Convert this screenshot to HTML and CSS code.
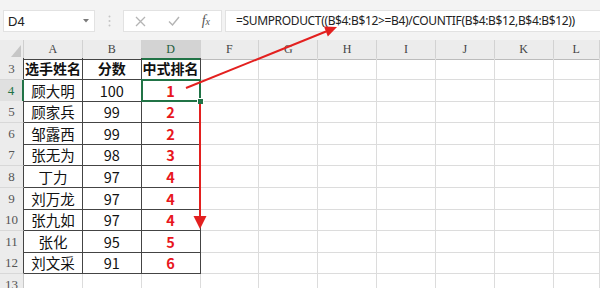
FILE: index.html
```html
<!DOCTYPE html>
<html lang="zh">
<head>
  <meta charset="UTF-8" />
  <title>中式排名</title>
  <link rel="stylesheet" href="styles.css">
</head>
<body>
  <div class="bar">
    <div class="namebox">
      <span>D4</span>
      <svg class="drop" width="6" height="4" viewBox="0 0 6 4"><path d="M0 0H6L3 3.5Z" fill="#7a7a7a"/></svg>
    </div>
    <div class="sep">
      <svg width="3" height="12" viewBox="0 0 3 12"><circle cx="1.5" cy="1.5" r="1" fill="#c4c4c4"/><circle cx="1.5" cy="6" r="1" fill="#c4c4c4"/><circle cx="1.5" cy="10.5" r="1" fill="#c4c4c4"/></svg>
    </div>
    <div class="fxbox">
      <svg width="11" height="11" viewBox="0 0 11 11"><path d="M1 1L10 10M10 1L1 10" stroke="#b4b4b4" stroke-width="1.3"/></svg>
      <svg width="12" height="10" viewBox="0 0 12 10"><path d="M1 5.5L4.5 9L11 1" fill="none" stroke="#b4b4b4" stroke-width="1.4"/></svg>
      <span class="fx">f<small>x</small></span>
    </div>
    <div class="formula">=SUMPRODUCT((B$4:B$12&gt;=B4)/COUNTIF(B$4:B$12,B$4:B$12))</div>
  </div>

  <div class="sheet">
    <div class="row head">
      <div class="corner"></div>
      <div class="ch edge">A</div><div class="ch edge">B</div><div class="ch on">D</div>
      <div class="ch">F</div><div class="ch">G</div><div class="ch">H</div><div class="ch">I</div><div class="ch">J</div><div class="ch">K</div><div class="ch">L</div>
    </div>
    <div class="row">
      <div class="rh edge">3</div>
      <div class="c t b">选手姓名</div><div class="c t b">分数</div><div class="c t b">中式排名</div>
      <div class="c"></div><div class="c"></div><div class="c"></div><div class="c"></div><div class="c"></div><div class="c"></div><div class="c"></div>
    </div>
    <div class="row">
      <div class="rh edge on">4</div>
      <div class="c t">顾大明</div><div class="c t">100</div><div class="c t rank sel">1</div>
      <div class="c"></div><div class="c"></div><div class="c"></div><div class="c"></div><div class="c"></div><div class="c"></div><div class="c"></div>
    </div>
    <div class="row">
      <div class="rh edge">5</div>
      <div class="c t">顾家兵</div><div class="c t">99</div><div class="c t rank">2</div>
      <div class="c"></div><div class="c"></div><div class="c"></div><div class="c"></div><div class="c"></div><div class="c"></div><div class="c"></div>
    </div>
    <div class="row">
      <div class="rh edge">6</div>
      <div class="c t">邹露西</div><div class="c t">99</div><div class="c t rank">2</div>
      <div class="c"></div><div class="c"></div><div class="c"></div><div class="c"></div><div class="c"></div><div class="c"></div><div class="c"></div>
    </div>
    <div class="row">
      <div class="rh edge">7</div>
      <div class="c t">张无为</div><div class="c t">98</div><div class="c t rank">3</div>
      <div class="c"></div><div class="c"></div><div class="c"></div><div class="c"></div><div class="c"></div><div class="c"></div><div class="c"></div>
    </div>
    <div class="row">
      <div class="rh edge">8</div>
      <div class="c t">丁力</div><div class="c t">97</div><div class="c t rank">4</div>
      <div class="c"></div><div class="c"></div><div class="c"></div><div class="c"></div><div class="c"></div><div class="c"></div><div class="c"></div>
    </div>
    <div class="row">
      <div class="rh edge">9</div>
      <div class="c t">刘万龙</div><div class="c t">97</div><div class="c t rank">4</div>
      <div class="c"></div><div class="c"></div><div class="c"></div><div class="c"></div><div class="c"></div><div class="c"></div><div class="c"></div>
    </div>
    <div class="row">
      <div class="rh edge">10</div>
      <div class="c t">张九如</div><div class="c t">97</div><div class="c t rank">4</div>
      <div class="c"></div><div class="c"></div><div class="c"></div><div class="c"></div><div class="c"></div><div class="c"></div><div class="c"></div>
    </div>
    <div class="row">
      <div class="rh edge">11</div>
      <div class="c t">张化</div><div class="c t">95</div><div class="c t rank">5</div>
      <div class="c"></div><div class="c"></div><div class="c"></div><div class="c"></div><div class="c"></div><div class="c"></div><div class="c"></div>
    </div>
    <div class="row">
      <div class="rh edge">12</div>
      <div class="c t">刘文采</div><div class="c t">91</div><div class="c t rank">6</div>
      <div class="c"></div><div class="c"></div><div class="c"></div><div class="c"></div><div class="c"></div><div class="c"></div><div class="c"></div>
    </div>
    <div class="row">
      <div class="rh">13</div>
      <div class="c"></div><div class="c"></div><div class="c"></div>
      <div class="c"></div><div class="c"></div><div class="c"></div><div class="c"></div><div class="c"></div><div class="c"></div><div class="c"></div>
    </div>
  </div>

  <!-- annotation arrows drawn over the sheet -->
  <svg class="arrows" width="600" height="288" viewBox="0 0 600 288">
    <line x1="186" y1="88" x2="326" y2="31.5" stroke="#e3201f" stroke-width="2"/>
    <polygon points="337,27 327.8,36.4 324,26.6" fill="#e3201f"/>
    <line x1="200" y1="104" x2="200" y2="218" stroke="#e3201f" stroke-width="2"/>
    <polygon points="193.5,216 206.5,216 200,229" fill="#e3201f"/>
  </svg>
</body>
</html>
```

FILE: styles.css
```css
body {
  margin: 0;
  width: 600px;
  height: 288px;
  overflow: hidden;
  position: relative;
  background: #fff;
  font-family: "Noto Sans CJK SC", "Noto Sans", sans-serif;
  color: #111;
}
.bar {
  height: 40px;
  box-sizing: border-box;
  padding-top: 10px;
  background: #f3f3f3;
  display: flex;
  align-items: flex-start;
}
.namebox,
.sep,
.fxbox {
  flex-shrink: 0;
}
.namebox {
  margin-left: 3px;
  width: 92px;
  height: 22px;
  box-sizing: border-box;
  background: #fff;
  border: 1px solid #e2e2e2;
  display: flex;
  align-items: center;
  justify-content: space-between;
  padding: 0 5px 0 4px;
  font: 13px "Liberation Sans", sans-serif;
  color: #222;
}
.sep {
  width: 28px;
  height: 22px;
  display: flex;
  align-items: center;
  justify-content: center;
}
.fxbox {
  width: 99px;
  height: 22px;
  box-sizing: border-box;
  background: #fff;
  border: 1px solid #e2e2e2;
  display: flex;
  align-items: center;
  justify-content: space-around;
}
.fx {
  font: italic 14px "Liberation Serif", serif;
  color: #555;
}
.fx small {
  font-size: 10px;
}
.formula {
  margin-left: 3px;
  flex: 1;
  min-width: 0;
  overflow: hidden;
  height: 22px;
  box-sizing: border-box;
  background: #fff;
  border: 1px solid #e2e2e2;
  border-right: none;
  padding-left: 10px;
  font: 12px/20px "Noto Sans", sans-serif;
  letter-spacing: -0.35px;
  color: #222;
  white-space: nowrap;
}
.row {
  display: grid;
  grid-template-columns: 24px 58.85px 58.85px 58.85px 58.85px 58.85px 58.85px 58.85px 58.85px 58.85px 46.35px;
  height: 21.6px;
}
.row.head {
  height: 18px;
}
.corner,
.ch,
.rh,
.c {
  box-sizing: border-box;
  border-right: 1px solid #dcdcdc;
  border-bottom: 1px solid #dcdcdc;
}
.corner {
  background: #ececec;
  border-bottom-color: #bcbcbc;
  border-right-color: #cfcfcf;
  display: flex;
  align-items: flex-end;
  justify-content: flex-end;
  padding: 0 2px 2px 0;
}
.corner::after {
  content: "";
  border-left: 10px solid transparent;
  border-bottom: 12px solid #c6c6c6;
}
.ch {
  background: #ececec;
  border-right-color: #d2d2d2;
  border-bottom-color: #bcbcbc;
  text-align: center;
  font: 12px/18px "Liberation Serif", serif;
  color: #444;
}
.ch.edge {
  border-bottom-color: #444;
}
.ch.on {
  background: #d3d3d3;
  border-bottom: 2px solid #217346;
  color: #1e5c3a;
}
.rh {
  background: #ececec;
  border-right-color: #c8c8c8;
  border-bottom-color: #d8d8d8;
  text-align: center;
  font: 13px/21px "Liberation Serif", serif;
  color: #555;
}
.rh.edge {
  border-right-color: #444;
}
.rh.on {
  background: #e0e0e0;
  border-right: 2px solid #217346;
  color: #217346;
}
.c {
  text-align: center;
  font-size: 14.5px;
  line-height: 21px;
  white-space: nowrap;
}
.c.t {
  border-right-color: #444;
  border-bottom-color: #444;
}
.b {
  font-weight: 700;
  font-size: 14px;
}
.rank {
  color: #e8161d;
  font-weight: 700;
}
.sel {
  position: relative;
}
.sel::before {
  content: "";
  position: absolute;
  inset: -1px -1px -1px -1px;
  border: 2px solid #217346;
}
.sel::after {
  content: "";
  position: absolute;
  right: -4px;
  bottom: -4px;
  width: 5px;
  height: 5px;
  background: #217346;
  border: 1px solid #fff;
}
.arrows {
  position: absolute;
  top: 0;
  left: 0;
  pointer-events: none;
}
```
